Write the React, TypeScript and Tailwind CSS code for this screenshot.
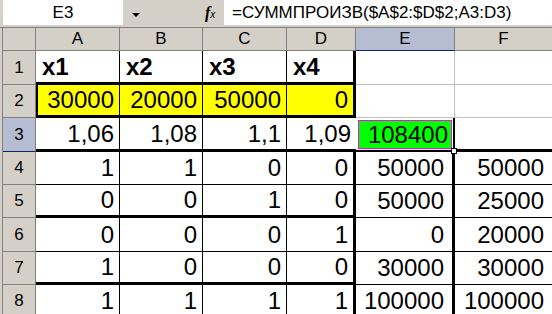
import type { ReactNode } from "react";

const FONT = "font-['Liberation_Sans',Arial,sans-serif]";

function ColHead({ label, sel = false, last = false }: { label: string; sel?: boolean; last?: boolean }) {
  return (
    <div
      className={`flex items-center justify-center text-[17px] border-b ${last ? "" : "border-r"} ${
        sel ? "bg-[#b6bdd3] border-b-[#0a246a] border-r-[#808080]" : "bg-[#d4d0c8] border-[#808080]"
      }`}
    >
      {label}
    </div>
  );
}

function RowHead({ n, sel = false }: { n: number; sel?: boolean }) {
  return (
    <div
      className={`flex items-center justify-center text-[17px] border-r border-b ${
        sel ? "bg-[#b6bdd3] border-r-[#808080] border-b-[#0a246a]" : "bg-[#d4d0c8] border-[#808080]"
      }`}
    >
      {n}
    </div>
  );
}

function Cell({ v = "", cls = "", left = false }: { v?: ReactNode; cls?: string; left?: boolean }) {
  return (
    <div
      className={`flex items-center ${left ? "justify-start pl-[6px] font-bold" : "justify-end pr-[5px]"} text-[24px] leading-none text-black ${cls}`}
    >
      {v}
    </div>
  );
}

// borders for the black-ruled block A4:D8
const rowBottom = ["border-b", "border-b-[3px]", "border-b", "border-b-[3px]", "border-b"];

const lower = [
  ["1", "1", "0", "0", "50000", "50000"],
  ["0", "0", "1", "0", "50000", "25000"],
  ["0", "0", "0", "1", "0", "20000"],
  ["1", "0", "0", "0", "30000", "30000"],
  ["1", "1", "1", "1", "100000", "100000"],
];

export default function App() {
  return (
    <div className={`w-[552px] h-[314px] overflow-hidden bg-white text-black ${FONT}`}>
      {/* formula bar */}
      <div className="h-[28px] bg-[#d4d0c8] border-b border-[#808080] flex items-start">
        <div className="ml-[3px] w-[120px] h-[25px] bg-white flex items-center justify-center text-[17px]">E3</div>
        <div className="ml-[9px] mt-[13px] w-0 h-0 border-l-[4px] border-r-[4px] border-t-[4px] border-l-transparent border-r-transparent border-t-black" />
        <div className="ml-[65px] mt-[5px] w-[18px] flex items-baseline">
          <span className="font-['Liberation_Serif',serif] italic font-bold text-[16px] leading-none">f</span>
          <span className="text-[10px] leading-none italic">x</span>
        </div>
        <div className="ml-[1px] flex-1 h-[25px] bg-white flex items-center pl-[8px] text-[17px] whitespace-nowrap">
          =СУММПРОИЗВ($A$2:$D$2;A3:D3)
        </div>
      </div>

      {/* sheet */}
      <div className="pl-[2px] bg-[#d4d0c8]">
        <div className="border-l border-[#808080] bg-white grid grid-cols-[33px_84px_83px_84px_69px_99px_97px] grid-rows-[23px_34px_33px_34px_33px_33px_34px_33px_33px]">
          <ColHead label="" />
          <ColHead label="A" />
          <ColHead label="B" />
          <ColHead label="C" />
          <ColHead label="D" />
          <ColHead label="E" sel />
          <ColHead label="F" last />

          {/* row 1 */}
          <RowHead n={1} />
          <Cell v="x1" left cls="border-r border-b-[3px] border-black" />
          <Cell v="x2" left cls="border-r border-b-[3px] border-black" />
          <Cell v="x3" left cls="border-r border-b-[3px] border-black" />
          <Cell v="x4" left cls="border-r-[3px] border-b-[3px] border-black" />
          <Cell cls="border-r border-b border-[#c0c0c0]" />
          <Cell cls="border-b border-[#c0c0c0]" />

          {/* row 2 */}
          <RowHead n={2} />
          <Cell v="30000" cls="bg-[#ffff00] border-l-2 border-r border-b-[3px] border-black" />
          <Cell v="20000" cls="bg-[#ffff00] border-r border-b-[3px] border-black" />
          <Cell v="50000" cls="bg-[#ffff00] border-r border-b-[3px] border-black" />
          <Cell v="0" cls="bg-[#ffff00] border-r-[3px] border-b-[3px] border-black" />
          <Cell cls="border-r border-b border-[#c0c0c0]" />
          <Cell cls="border-b border-[#c0c0c0]" />

          {/* row 3 */}
          <RowHead n={3} sel />
          <Cell v="1,06" cls="border-r border-b-[3px] border-black" />
          <Cell v="1,08" cls="border-r border-b-[3px] border-black" />
          <Cell v="1,1" cls="border-r border-b-[3px] border-black" />
          <Cell v="1,09" cls="border-b-[3px] border-black" />
          <div className="relative border-r-2 border-b-2 border-black pt-[2px] pl-[2px] pr-[1px] pb-[1px] bg-white">
            <div className="h-full bg-[#00ff00] border border-[#ff00ff] flex items-center justify-end pr-[3px] text-[24px] leading-none">
              108400
            </div>
            <div className="absolute -right-[4px] -bottom-[4px] w-[6px] h-[6px] bg-white border border-black" />
          </div>
          <Cell cls="border-b-[3px] border-black" />

          {/* rows 4-8 */}
          {lower.map((r, i) => (
            <div key={i} className="contents">
              <RowHead n={i + 4} />
              <Cell v={r[0]} cls={`border-r ${rowBottom[i]} border-black`} />
              <Cell v={r[1]} cls={`border-r ${rowBottom[i]} border-black`} />
              <Cell v={r[2]} cls={`border-r ${rowBottom[i]} border-black`} />
              <Cell v={r[3]} cls={`border-r-[3px] ${rowBottom[i]} border-black`} />
              <Cell v={r[4]} cls="border-r-[3px] border-b border-black pr-[8px]" />
              <Cell v={r[5]} cls="border-b border-black pr-[8px]" />
            </div>
          ))}
        </div>
      </div>
    </div>
  );
}
